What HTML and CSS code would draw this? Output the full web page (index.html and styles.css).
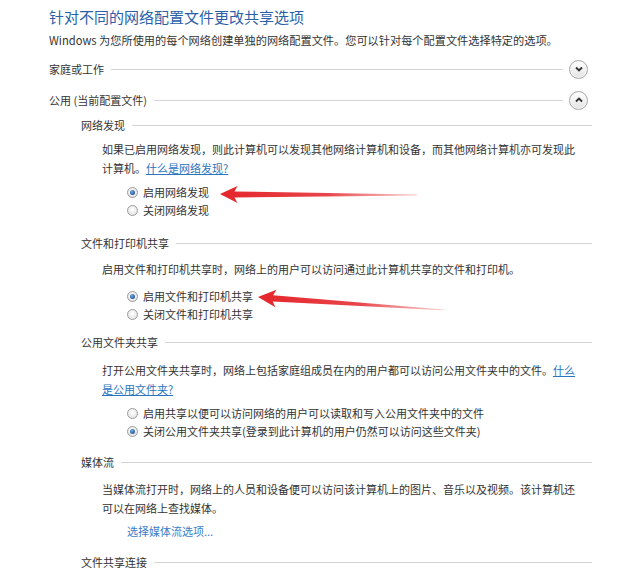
FILE: index.html
```html
<!DOCTYPE html>
<html lang="zh-CN">
<head>
<meta charset="utf-8">
<title>高级共享设置</title>
<link rel="stylesheet" href="styles.css">
</head>
<body>
<div class="page">
  <div class="title">针对不同的网络配置文件更改共享选项</div>
  <div class="desc">Windows 为您所使用的每个网络创建单独的网络配置文件。您可以针对每个配置文件选择特定的选项。</div>

  <div class="h1 h1-first">
    <span class="h1-text">家庭或工作</span>
    <span class="rule"></span>
    <span class="chev"><svg width="10" height="8" viewBox="0 0 10 8"><path d="M2 2.5 L5 5.5 L8 2.5" fill="none" stroke="#333" stroke-width="1.8"/></svg></span>
  </div>
  <div class="h1 h1-second">
    <span class="h1-text">公用 (当前配置文件)</span>
    <span class="rule"></span>
    <span class="chev"><svg width="10" height="8" viewBox="0 0 10 8"><path d="M2 5.5 L5 2.5 L8 5.5" fill="none" stroke="#333" stroke-width="1.8"/></svg></span>
  </div>

  <div class="h2 s1">
    <span class="h2-text">网络发现</span><span class="rule"></span>
  </div>
  <p class="para p1">如果已启用网络发现，则此计算机可以发现其他网络计算机和设备，而其他网络计算机亦可发现此<br>计算机。<a class="link" href="#">什么是网络发现?</a></p>
  <div class="radios r1">
    <div class="opt"><span class="radio on"></span>启用网络发现</div>
    <div class="opt"><span class="radio"></span>关闭网络发现</div>
  </div>

  <div class="h2 s2">
    <span class="h2-text">文件和打印机共享</span><span class="rule"></span>
  </div>
  <p class="para p2">启用文件和打印机共享时，网络上的用户可以访问通过此计算机共享的文件和打印机。</p>
  <div class="radios r2">
    <div class="opt"><span class="radio on"></span>启用文件和打印机共享</div>
    <div class="opt"><span class="radio"></span>关闭文件和打印机共享</div>
  </div>

  <div class="h2 s3">
    <span class="h2-text">公用文件夹共享</span><span class="rule"></span>
  </div>
  <p class="para p3">打开公用文件夹共享时，网络上包括家庭组成员在内的用户都可以访问公用文件夹中的文件。<a class="link" href="#">什么<br>是公用文件夹?</a></p>
  <div class="radios r3">
    <div class="opt"><span class="radio"></span>启用共享以便可以访问网络的用户可以读取和写入公用文件夹中的文件</div>
    <div class="opt"><span class="radio on"></span>关闭公用文件夹共享(登录到此计算机的用户仍然可以访问这些文件夹)</div>
  </div>

  <div class="h2 s4">
    <span class="h2-text">媒体流</span><span class="rule"></span>
  </div>
  <p class="para p4">当媒体流打开时，网络上的人员和设备便可以访问该计算机上的图片、音乐以及视频。该计算机还<br>可以在网络上查找媒体。</p>
  <div class="media-link"><a class="plain-link" href="#">选择媒体流选项...</a></div>

  <div class="h2 s5">
    <span class="h2-text">文件共享连接</span><span class="rule"></span>
  </div>
</div>

<svg class="arrows" width="620" height="574" viewBox="0 0 620 574">
  <defs>
    <linearGradient id="ag" x1="0" y1="0" x2="1" y2="0">
      <stop offset="0" stop-color="#e4262b"/>
      <stop offset="0.55" stop-color="#e8454a"/>
      <stop offset="1" stop-color="#f2a0a2" stop-opacity="0.6"/>
    </linearGradient>
  </defs>
  <path d="M220 194 L237.5 186 L234.5 191.4 L417 194.6 L417 195.4 L234.5 197.6 L237.5 203 Z" fill="url(#ag)"/>
  <g transform="rotate(3.7 258 297)">
    <path d="M258 297 L276 288.5 L273 294.4 L443.5 297.6 L443.5 298.4 L273 300.6 L276 306 Z" fill="url(#ag)"/>
  </g>
</svg>
</body>
</html>
```
FILE: styles.css
```css
html, body {
  margin: 0;
  padding: 0;
  background: #ffffff;
}

body {
  font-family: "Noto Sans CJK SC", "Noto Sans", sans-serif;
  color: #333333;
  font-size: 11px;
  position: relative;
  width: 620px;
  height: 574px;
  overflow: hidden;
}

.page {
  padding: 0 28px 0 49px;
  display: flex;
  flex-direction: column;
}

.title {
  margin-top: 6px;
  line-height: 22px;
  font-size: 15px;
  color: #2b5fa8;
  white-space: nowrap;
}

.desc {
  margin-top: 3px;
  line-height: 18px;
  font-size: 11.2px;
  white-space: nowrap;
}

.h1 {
  display: flex;
  align-items: center;
  height: 20px;
  padding-right: 0;
}
.h1-first { margin-top: 10px; }
.h1-second { margin-top: 11px; }

.h1-text {
  font-size: 11px;
  white-space: nowrap;
}

.rule {
  flex: 1;
  height: 0;
  border-top: 1px solid #d4d4d4;
  margin-left: 7px;
}

.h1 .rule {
  margin-right: 6px;
}

.chev {
  width: 17px;
  height: 17px;
  border-radius: 50%;
  border: 1px solid #a8a8a8;
  background: linear-gradient(#ffffff, #e3e3e3);
  box-shadow: inset 0 0 0 1px #f6f6f6;
  display: flex;
  align-items: center;
  justify-content: center;
  margin-right: 4px;
}

.h2 {
  display: flex;
  align-items: center;
  height: 18px;
  padding-left: 32px;
}
.h2-text {
  white-space: nowrap;
}

.s1 { margin-top: 6px; }
.s2 { margin-top: 15px; }
.s3 { margin-top: 10px; }
.s4 { margin-top: 13px; }
.s5 { margin-top: 13px; }

.para {
  margin: 0;
  padding-left: 53px;
  line-height: 19px;
  white-space: nowrap;
}
.p1 { margin-top: 6px; }
.p2 { margin-top: 8px; }
.p3 { margin-top: 10px; }
.p4 { margin-top: 9px; }

.link {
  color: #2a74c0;
  text-decoration: underline;
}

.radios {
  padding-left: 78px;
  display: flex;
  flex-direction: column;
}
.r1 { margin-top: 5px; }
.r2 { margin-top: 8px; }
.r3 { margin-top: 5px; }

.opt {
  height: 18px;
  display: flex;
  align-items: center;
  white-space: nowrap;
}

.radio {
  width: 9px;
  height: 9px;
  border-radius: 50%;
  border: 1px solid #9c9c9c;
  background: radial-gradient(circle at 50% 40%, #ffffff 0%, #e4e4e4 80%);
  margin-right: 5px;
  position: relative;
  flex: none;
}

.radio.on::after {
  content: "";
  position: absolute;
  left: 2px;
  top: 2px;
  width: 5px;
  height: 5px;
  border-radius: 50%;
  background: radial-gradient(circle at 40% 35%, #6fa8e0 0%, #1f4f90 80%);
}

.media-link {
  margin-top: 4px;
  padding-left: 78px;
  line-height: 18px;
}

.plain-link {
  color: #3a7cc8;
  text-decoration: none;
}

.arrows {
  position: absolute;
  left: 0;
  top: 0;
  pointer-events: none;
}
```
